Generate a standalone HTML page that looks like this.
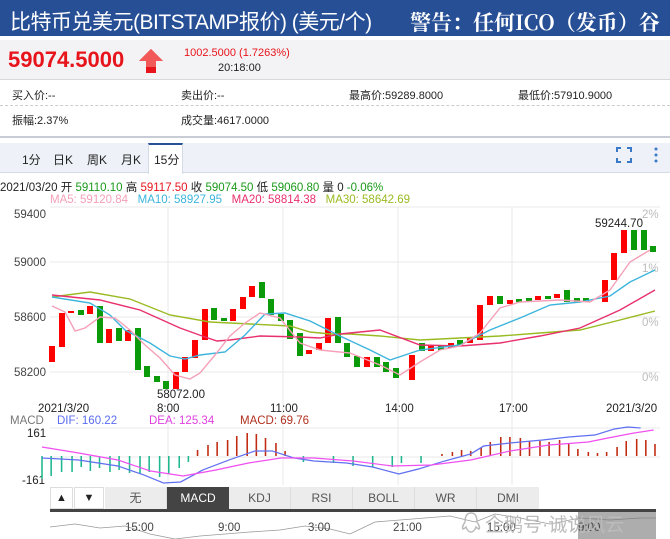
<!DOCTYPE html>
<html><head><meta charset="utf-8"><style>
*{margin:0;padding:0;box-sizing:border-box}
body{width:670px;height:539px;overflow:hidden;background:#fff;font-family:"Liberation Sans","Noto Sans CJK SC",sans-serif;position:relative;font-size:12px;color:#222}
.a{position:absolute;white-space:nowrap}
</style></head><body>
<div class="a" style="left:0;top:0;width:670px;height:36px;background:#264f96"></div>
<div class="a" style="left:10px;top:6px;font-size:21px;color:#fff;letter-spacing:-0.5px">比特币兑美元(BITSTAMP报价) (美元/个)</div>
<div class="a" style="left:410px;top:7px;font-size:21px;color:#fff;font-family:'Noto Serif CJK SC',serif;font-weight:bold">警告：任何ICO（发币）谷</div>
<div class="a" style="left:0;top:40px;width:670px;height:40px;background:#f3f3f5;border-bottom:1px solid #d8d8dc"></div>
<div class="a" style="left:8px;top:47px;font-size:22px;font-weight:bold;color:#e8141c">59074.5000</div>
<svg class="a" style="left:138px;top:48px" width="26" height="26"><polygon points="13,1 25,13 18,13 18,25 8,25 8,13 1,13" fill="#e8141c"/><polygon points="13,1 25,13 18,13 18,19 8,19 8,13 1,13" fill="#f25a5a"/></svg>
<div class="a" style="left:184px;top:47px;font-size:11px;color:#e8141c">1002.5000 (1.7263%)</div>
<div class="a" style="left:218px;top:62px;font-size:11px">20:18:00</div>
<div class="a" style="left:0;top:80px;width:670px;height:26px;border-bottom:1px dashed #ccc"></div>
<div class="a" style="left:12px;top:87px;font-size:11px">买入价:--</div>
<div class="a" style="left:181px;top:87px;font-size:11px">卖出价:--</div>
<div class="a" style="left:349px;top:87px;font-size:11px">最高价:59289.8000</div>
<div class="a" style="left:518px;top:87px;font-size:11px">最低价:57910.9000</div>
<div class="a" style="left:12px;top:112px;font-size:11px">振幅:2.37%</div>
<div class="a" style="left:181px;top:112px;font-size:11px">成交量:4617.0000</div>
<div class="a" style="left:0;top:136px;width:670px;height:2px;background:#c8ccd6"></div>
<div class="a" style="left:0;top:143px;width:670px;height:30px;background:#eef2f8;border-bottom:1px solid #d5dbe6"></div>
<div class="a" style="left:148px;top:143px;width:35px;height:31px;background:#fff;border-top:2px solid #264f96;border-left:1px solid #d5dbe6;border-right:1px solid #d5dbe6"></div>
<div class="a" style="left:22px;top:151px;font-size:12px">1分</div>
<div class="a" style="left:53px;top:151px;font-size:12px">日K</div>
<div class="a" style="left:87px;top:151px;font-size:12px">周K</div>
<div class="a" style="left:121px;top:151px;font-size:12px">月K</div>
<div class="a" style="left:154px;top:151px;font-size:12px">15分</div>
<svg class="a" style="left:615px;top:146px" width="50" height="20"><path d="M2 6V2h4M12 2h4v4M16 12v4h-4M6 16H2v-4" stroke="#3a78c8" stroke-width="2" fill="none"/><circle cx="41" cy="3" r="1.5" fill="#3a78c8"/><circle cx="41" cy="9" r="1.5" fill="#3a78c8"/><circle cx="41" cy="15" r="1.5" fill="#3a78c8"/></svg>
<div class="a" style="left:0;top:179px;font-size:11.5px">2021/03/20 开 <span style="color:#1a9a1a">59110.10</span> 高 <span style="color:#e8141c">59117.50</span> 收 <span style="color:#1a9a1a">59074.50</span> 低 <span style="color:#1a9a1a">59060.80</span> 量 0 <span style="color:#1a9a1a">-0.06%</span></div>
<div class="a" style="left:50px;top:194px;font-size:11.5px"><span style="color:#f5a0b8">MA5: 59120.84</span>&nbsp;&nbsp;&nbsp;<span style="color:#3cb4dc">MA10: 58927.95</span>&nbsp;&nbsp;&nbsp;<span style="color:#e8306c">MA20: 58814.38</span>&nbsp;&nbsp;&nbsp;<span style="color:#99bb22">MA30: 58642.69</span></div>
<svg class="a" style="left:0;top:0" width="670" height="539">
<g stroke="#e8e8e8" stroke-width="1">
<line x1="50" y1="207" x2="660" y2="207"/><line x1="50" y1="262" x2="660" y2="262"/><line x1="50" y1="317" x2="660" y2="317"/><line x1="50" y1="372" x2="660" y2="372"/>
<line x1="168" y1="207" x2="168" y2="485"/><line x1="283" y1="207" x2="283" y2="485"/><line x1="398" y1="207" x2="398" y2="485"/><line x1="512" y1="207" x2="512" y2="485"/>
<line x1="50" y1="428" x2="660" y2="428"/><line x1="50" y1="457" x2="660" y2="457"/>
</g>
<g font-size="11.5" fill="#444">
<text x="14" y="218">59400</text><text x="14" y="266">59000</text><text x="14" y="321">58600</text><text x="14" y="376">58200</text>
</g>
<g font-size="11.5" fill="#bbb"><text x="642" y="218">2%</text><text x="642" y="272">1%</text><text x="642" y="326">0%</text><text x="642" y="381">0%</text></g>
<g fill="#f00"><rect x="49" y="346" width="6" height="16"/><rect x="59" y="313" width="6" height="34"/><rect x="68" y="311" width="6" height="2"/><rect x="87" y="306" width="6" height="8"/><rect x="106" y="329" width="6" height="14"/><rect x="125" y="330" width="6" height="11"/><rect x="173" y="372" width="6" height="17"/><rect x="182" y="357" width="6" height="15"/><rect x="192" y="340" width="6" height="18"/><rect x="202" y="309" width="6" height="31"/><rect x="230" y="309" width="6" height="12"/><rect x="240" y="297" width="6" height="12"/><rect x="249" y="286" width="6" height="11"/><rect x="306" y="350" width="6" height="4"/><rect x="316" y="343" width="6" height="7"/><rect x="325" y="318" width="6" height="25"/><rect x="364" y="357" width="6" height="10"/><rect x="409" y="355" width="6" height="25"/><rect x="428" y="345" width="6" height="6"/><rect x="448" y="343" width="6" height="5"/><rect x="467" y="338" width="6" height="5"/><rect x="477" y="305" width="6" height="35"/><rect x="487" y="296" width="6" height="9"/><rect x="507" y="300" width="6" height="4"/><rect x="535" y="296" width="6" height="4"/><rect x="554" y="294" width="6" height="4"/><rect x="602" y="280" width="6" height="22"/><rect x="611" y="253" width="6" height="27"/><rect x="621" y="230" width="6" height="23"/></g>
<g fill="#0a9a0a"><rect x="78" y="310" width="6" height="5"/><rect x="97" y="306" width="6" height="37"/><rect x="116" y="328" width="6" height="13"/><rect x="135" y="328" width="6" height="42"/><rect x="144" y="366" width="6" height="11"/><rect x="154" y="376" width="6" height="6"/><rect x="163" y="381" width="6" height="8"/><rect x="211" y="308" width="6" height="12"/><rect x="221" y="318" width="6" height="3"/><rect x="259" y="282" width="6" height="16"/><rect x="268" y="299" width="6" height="16"/><rect x="278" y="314" width="6" height="7"/><rect x="287" y="320" width="6" height="19"/><rect x="297" y="333" width="6" height="23"/><rect x="335" y="317" width="6" height="26"/><rect x="344" y="343" width="6" height="14"/><rect x="354" y="356" width="6" height="11"/><rect x="374" y="357" width="6" height="10"/><rect x="383" y="362" width="6" height="10"/><rect x="393" y="368" width="6" height="10"/><rect x="419" y="343" width="6" height="8"/><rect x="438" y="345" width="6" height="5"/><rect x="457" y="340" width="6" height="6"/><rect x="497" y="296" width="6" height="8"/><rect x="516" y="299" width="6" height="3"/><rect x="526" y="298" width="6" height="3"/><rect x="545" y="296" width="6" height="3"/><rect x="564" y="290" width="6" height="12"/><rect x="574" y="298" width="6" height="4"/><rect x="583" y="298" width="6" height="4"/><rect x="631" y="230" width="6" height="20"/><rect x="641" y="230" width="6" height="20"/><rect x="650" y="246" width="6" height="6"/></g>
<g fill="none" stroke-width="1.4">
<polyline stroke="#99bb22" points="52,297 90,292 130,299 170,315 210,322 250,324 290,326 310,332 330,334 350,334 380,336 420,340 460,338 500,336 540,333 580,330 620,320 655,311"/>
<polyline stroke="#e8306c" points="52,295 100,300 140,310 180,328 205,337 217,341 230,340 260,336 300,337 320,338 340,334 380,330 420,345 460,346 500,343 540,336 580,328 620,310 655,290"/>
<polyline stroke="#3cb4dc" points="52,297 90,303 110,315 125,330 150,343 170,356 185,359 200,355 225,352 245,335 265,314 285,313 310,321 340,336 370,350 390,360 420,350 460,345 490,330 520,318 550,305 580,302 610,296 630,282 655,270"/>
<polyline stroke="#f5a0b8" points="52,306 65,312 75,331 85,328 100,317 115,318 130,330 145,345 160,358 175,375 190,379 200,373 215,355 230,336 245,323 260,313 280,318 300,343 320,350 350,353 380,365 400,375 420,362 440,350 460,346 480,333 500,308 520,302 560,300 590,302 610,290 630,262 650,250"/>
</g>
<text x="595" y="227" font-size="11.5" fill="#222">59244.70</text>
<text x="157" y="398" font-size="11.5" fill="#222">58072.00</text>
<g font-size="11.5" fill="#222"><text x="38" y="412">2021/3/20</text><text x="157" y="412">8:00</text><text x="270" y="412">11:00</text><text x="385" y="412">14:00</text><text x="499" y="412">17:00</text><text x="606" y="412">2021/3/20</text></g>
<text x="10" y="424" font-size="11.5" fill="#777">MACD</text><text x="57" y="424" font-size="11.5" fill="#5a6cf0">DIF: 160.22</text><text x="149" y="424" font-size="11.5" fill="#e040e0">DEA: 125.34</text><text x="240" y="424" font-size="11.5" fill="#b03020">MACD: 69.76</text>
<text x="27" y="437" font-size="11.5" fill="#222">161</text><text x="22" y="484" font-size="11.5" fill="#222">-161</text>
<g transform="translate(42,0) scale(1.307,1) translate(-42,0)">
<g stroke="#20b890" stroke-width="1.2" vector-effect="non-scaling-stroke"><line x1="42" y1="456" x2="42" y2="479"/><line x1="49" y1="456" x2="49" y2="476"/><line x1="57" y1="456" x2="57" y2="472"/><line x1="65" y1="456" x2="65" y2="472"/><line x1="72" y1="456" x2="72" y2="467"/><line x1="79" y1="456" x2="79" y2="471"/><line x1="86" y1="456" x2="86" y2="468"/><line x1="94" y1="456" x2="94" y2="472"/><line x1="101" y1="456" x2="101" y2="470"/><line x1="109" y1="456" x2="109" y2="473"/><line x1="117" y1="456" x2="117" y2="474"/><line x1="124" y1="456" x2="124" y2="472"/><line x1="132" y1="456" x2="132" y2="477"/><line x1="139" y1="456" x2="139" y2="474"/><line x1="147" y1="456" x2="147" y2="468"/><line x1="154" y1="456" x2="154" y2="462"/><line x1="242" y1="456" x2="242" y2="462"/><line x1="265" y1="456" x2="265" y2="463"/><line x1="280" y1="456" x2="280" y2="466"/><line x1="295" y1="456" x2="295" y2="467"/><line x1="310" y1="456" x2="310" y2="467"/><line x1="317" y1="456" x2="317" y2="463"/><line x1="332" y1="456" x2="332" y2="463"/></g>
<g stroke="#c02a10" stroke-width="1.2"><line x1="161" y1="456" x2="161" y2="450"/><line x1="169" y1="456" x2="169" y2="445"/><line x1="176" y1="456" x2="176" y2="442"/><line x1="184" y1="456" x2="184" y2="440"/><line x1="191" y1="456" x2="191" y2="436"/><line x1="199" y1="456" x2="199" y2="433"/><line x1="206" y1="456" x2="206" y2="434"/><line x1="213" y1="456" x2="213" y2="438"/><line x1="221" y1="456" x2="221" y2="443"/><line x1="228" y1="456" x2="228" y2="451"/><line x1="348" y1="456" x2="348" y2="454"/><line x1="356" y1="456" x2="356" y2="452"/><line x1="363" y1="456" x2="363" y2="450"/><line x1="370" y1="456" x2="370" y2="451"/><line x1="378" y1="456" x2="378" y2="448"/><line x1="385" y1="456" x2="385" y2="442"/><line x1="393" y1="456" x2="393" y2="437"/><line x1="400" y1="456" x2="400" y2="437"/><line x1="408" y1="456" x2="408" y2="438"/><line x1="415" y1="456" x2="415" y2="441"/><line x1="423" y1="456" x2="423" y2="441"/><line x1="430" y1="456" x2="430" y2="442"/><line x1="438" y1="456" x2="438" y2="440"/><line x1="445" y1="456" x2="445" y2="443"/><line x1="452" y1="456" x2="452" y2="449"/><line x1="460" y1="456" x2="460" y2="452"/><line x1="467" y1="456" x2="467" y2="453"/><line x1="474" y1="456" x2="474" y2="452"/><line x1="482" y1="456" x2="482" y2="447"/><line x1="489" y1="456" x2="489" y2="441"/><line x1="497" y1="456" x2="497" y2="439"/><line x1="504" y1="456" x2="504" y2="440"/><line x1="511" y1="456" x2="511" y2="444"/></g>
<polyline fill="none" stroke="#6070f0" stroke-width="1.2" points="42,458 70,460 100,466 120,475 135,483 148,482 165,470 185,460 205,451 218,451 235,458 250,461 275,463 295,467 315,474 330,469 350,461 370,454 380,446 400,443 425,440 445,437 465,435 480,429 490,427 500,428"/>
<polyline fill="none" stroke="#f050f0" stroke-width="1.2" points="42,447 70,453 100,460 125,471 150,476 175,470 200,463 225,458 250,458 280,461 310,466 340,465 370,460 400,451 430,445 460,442 475,438 495,433 510,430"/>
</g>
</svg>
<div class="a" style="left:50px;top:487px;width:23px;height:22px;background:#fff;border:1px solid #ddd;font-size:11px;text-align:center;line-height:20px">▲</div>
<div class="a" style="left:74px;top:487px;width:30px;height:22px;background:#fff;border:1px solid #ddd;font-size:11px;text-align:center;line-height:20px">▼</div>
<div class="a" style="left:105px;top:487px;width:434px;height:22px;display:flex;font-size:12px;color:#555">
<div style="width:62px;border-right:1px solid #ddd;text-align:center;line-height:22px;background:#ececec">无</div>
<div style="width:62px;text-align:center;line-height:22px;background:#444;color:#fff">MACD</div>
<div style="width:62px;border-right:1px solid #ddd;text-align:center;line-height:22px;background:#ececec">KDJ</div>
<div style="width:62px;border-right:1px solid #ddd;text-align:center;line-height:22px;background:#ececec">RSI</div>
<div style="width:62px;border-right:1px solid #ddd;text-align:center;line-height:22px;background:#ececec">BOLL</div>
<div style="width:62px;border-right:1px solid #ddd;text-align:center;line-height:22px;background:#ececec">WR</div>
<div style="width:62px;text-align:center;line-height:22px;background:#ececec">DMI</div></div>
<div class="a" style="left:50px;top:509px;width:606px;height:3px;background:#444"></div>
<svg class="a" style="left:50px;top:512px" width="606" height="27"><polyline fill="none" stroke="#999" stroke-width="0.8" points="0,15 25,12 50,16 75,14 100,22 125,27 150,24 175,22 200,20 230,18 255,14 280,17 300,22 325,10 350,8 375,6 400,4 425,10 445,2 470,6 500,12 530,6 560,8 590,6 606,6"/><rect x="528" y="0" width="78" height="27" fill="#777" opacity="0.6"/></svg>
<div class="a" style="left:125px;top:522px;font-size:11.5px;color:#444">15:00</div>
<div class="a" style="left:218px;top:522px;font-size:11.5px;color:#444">9:00</div>
<div class="a" style="left:308px;top:522px;font-size:11.5px;color:#444">3:00</div>
<div class="a" style="left:393px;top:522px;font-size:11.5px;color:#444">21:00</div>
<div class="a" style="left:487px;top:522px;font-size:11.5px;color:#444">15:00</div>
<div class="a" style="left:578px;top:522px;font-size:11.5px;color:#444">9:00</div>
<div class="a" style="left:485px;top:510px;font-size:19px;color:#bbb">企鹅号·诚说风云</div>
<svg class="a" style="left:460px;top:511px" width="22" height="24"><path d="M11 2c-5 0-6 5-6 9-2 3-3 6-2 7 1 0 2-1 3-2 1 3 3 5 5 5s4-2 5-5c1 1 2 2 3 2 1-1 0-4-2-7 0-4-1-9-6-9z" fill="none" stroke="#bbb" stroke-width="1.5"/></svg>
</body></html>
